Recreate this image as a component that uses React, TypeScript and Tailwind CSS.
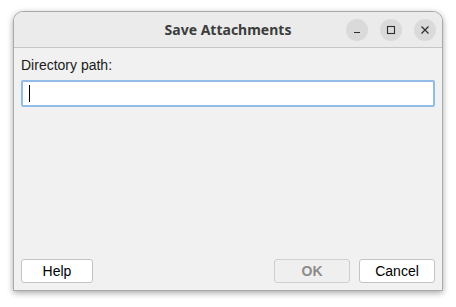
const ControlButton = ({ children }: { children: React.ReactNode }) => (
  <div className="flex h-[22px] w-[22px] items-center justify-center rounded-full bg-[#dadada] text-[#2e2e2e]">
    {children}
  </div>
);

const DialogButton = ({ label, disabled, width }: { label: string; disabled?: boolean; width: string }) => (
  <button
    className={
      disabled
        ? `h-[24px] ${width} rounded-[3px] border border-[#cfcfcf] bg-[#efefef] text-[14px] font-bold text-[#8c8c8c]`
        : `h-[24px] ${width} rounded-[3px] border border-[#c4c4c4] bg-white text-[14px] text-black`
    }
  >
    {label}
  </button>
);

export default function App() {
  return (
    <div className="h-[307px] w-[456px] bg-white pl-[13px] pt-[11px] font-['Liberation_Sans',Arial,sans-serif]">
      <div className="flex h-[280px] w-[430px] flex-col overflow-hidden rounded-t-[10px] border border-[#a9a9a9] bg-[#f1f1f1] shadow-[0_2px_6px_rgba(0,0,0,0.35)]">
        <div className="relative flex h-[36px] shrink-0 items-center justify-center border-b border-[#c6c6c6] bg-[#ebebeb]">
          <span className="font-['Noto_Sans',sans-serif] text-[14px] font-bold text-[#3d3d3d]">Save Attachments</span>
          <div className="absolute right-[6px] top-[7px] flex gap-[12px]">
            <ControlButton>
              <svg width="10" height="10" viewBox="0 0 10 10">
                <path d="M2 7.5h6" stroke="currentColor" strokeWidth="1.2" />
              </svg>
            </ControlButton>
            <ControlButton>
              <svg width="10" height="10" viewBox="0 0 10 10">
                <rect x="1.5" y="1.5" width="7" height="7" fill="none" stroke="currentColor" strokeWidth="1.1" />
              </svg>
            </ControlButton>
            <ControlButton>
              <svg width="10" height="10" viewBox="0 0 10 10">
                <path d="M1.5 1.5l7 7M8.5 1.5l-7 7" stroke="currentColor" strokeWidth="1.2" />
              </svg>
            </ControlButton>
          </div>
        </div>
        <div className="flex flex-1 flex-col px-[7px] pb-[7px] pt-[9px]">
          <label className="text-[14px] leading-[16px] text-[#1a1a1a]">Directory path:</label>
          <div className="mt-[7px] flex h-[27px] w-[414px] items-center rounded-[2px] border-2 border-[#92bde9] bg-white pl-[6px]">
            <div className="h-[17px] w-px bg-black" />
          </div>
          <div className="mt-auto flex items-center">
            <DialogButton label="Help" width="w-[72px]" />
            <div className="ml-auto flex gap-[9px]">
              <DialogButton label="OK" disabled width="w-[76px]" />
              <DialogButton label="Cancel" width="w-[76px]" />
            </div>
          </div>
        </div>
      </div>
    </div>
  );
}
